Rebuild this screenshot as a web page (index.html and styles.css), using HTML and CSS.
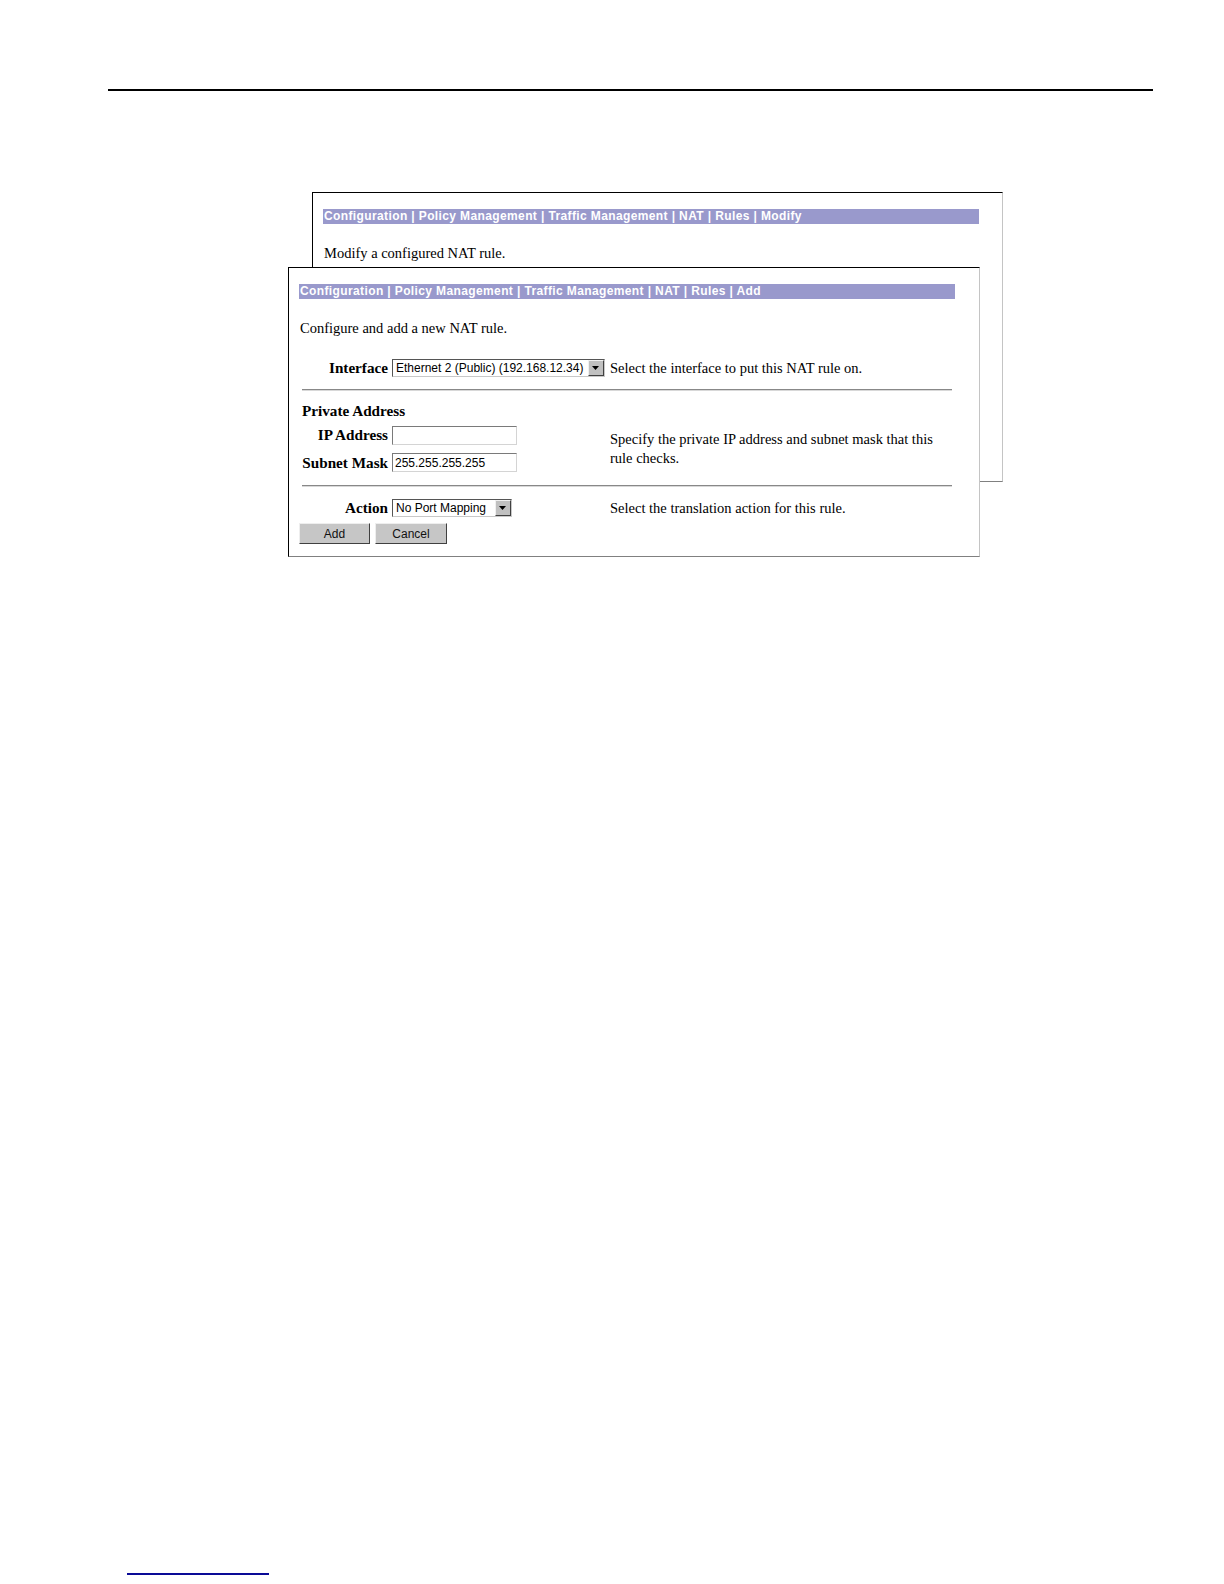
FILE: index.html
```html
<!DOCTYPE html>
<html lang="en">
<head>
<meta charset="utf-8">
<title>NAT Rules</title>
<link rel="stylesheet" href="styles.css">
</head>
<body>
<div class="page">
  <div class="top-rule"></div>
  <div class="desk">
    <section class="win win-back">
      <div class="crumb">Configuration | Policy Management | Traffic Management | NAT | Rules | Modify</div>
      <p class="intro">Modify a configured NAT rule.</p>
    </section>
    <section class="win win-front">
      <div class="crumb">Configuration | Policy Management | Traffic Management | NAT | Rules | Add</div>
      <p class="intro">Configure and add a new NAT rule.</p>
      <div class="form">
        <div class="lbl r-a">Interface</div>
        <div class="ctl r-a">
          <span class="select sel-if"><span class="sel-text">Ethernet 2 (Public) (192.168.12.34)</span><span class="sel-btn"><svg width="8" height="5" viewBox="0 0 8 5"><path d="M0 0h7L3.5 4z" fill="#000"/></svg></span></span>
        </div>
        <div class="desc r-a">Select the interface to put this NAT rule on.</div>
        <div class="rule r-b"></div>
        <div class="section-title r-c">Private Address</div>
        <div class="lbl r-d">IP Address</div>
        <div class="ctl r-d"><input class="text" type="text"></div>
        <div class="desc desc-span">Specify the private IP address and subnet mask that this rule checks.</div>
        <div class="lbl r-e">Subnet Mask</div>
        <div class="ctl r-e"><input class="text" type="text" value="255.255.255.255"></div>
        <div class="rule r-f"></div>
        <div class="lbl r-g">Action</div>
        <div class="ctl r-g">
          <span class="select sel-action"><span class="sel-text">No Port Mapping</span><span class="sel-btn"><svg width="8" height="5" viewBox="0 0 8 5"><path d="M0 0h7L3.5 4z" fill="#000"/></svg></span></span>
        </div>
        <div class="desc r-g">Select the translation action for this rule.</div>
      </div>
      <div class="buttons">
        <button class="btn btn-add" type="button">Add</button>
        <button class="btn btn-cancel" type="button">Cancel</button>
      </div>
    </section>
  </div>
  <div class="footer-rule"></div>
</div>
</body>
</html>
```

FILE: styles.css
```css
html, body {
  margin: 0;
  padding: 0;
  background: #fff;
}
body {
  font-family: "Liberation Serif", "Times New Roman", serif;
  color: #000;
}
.page {
  width: 1224px;
  height: 1584px;
  padding-top: 89px;
  box-sizing: border-box;
}
.top-rule {
  margin-left: 108px;
  width: 1045px;
  border-top: 2px solid #000;
}
.desk {
  position: relative;
  height: 470px;
}
.win {
  position: absolute;
  box-sizing: border-box;
  width: 691px;
  height: 290px;
  background: #fff;
  border-style: solid;
  border-width: 1px;
  border-color: #000 #c4c4c4 #808080 #000;
  padding: 16px 10px 0 10px;
}
.win-back {
  left: 312px;
  top: 101px;
}
.win-front {
  left: 288px;
  top: 176px;
  width: 692px;
}
.crumb {
  width: 656px;
  height: 15px;
  line-height: 15px;
  background: #9999cc;
  color: #fff;
  font-family: "Liberation Sans", Arial, sans-serif;
  font-weight: bold;
  font-size: 12px;
  letter-spacing: 0.38px;
  white-space: nowrap;
  overflow: hidden;
  padding-left: 1px;
  box-sizing: border-box;
}
.intro {
  margin: 21px 0 0 1px;
  font-size: 14.5px;
  line-height: 17px;
}
.form {
  margin: 20px 0 0 3px;
  width: 650px;
  display: grid;
  grid-template-columns: 86px 214px 1fr;
  grid-template-rows: 22px 22px 20px 28px 27px 19px 26px;
  column-gap: 4px;
  align-items: center;
}
.r-a { grid-row: 1; }
.r-b { grid-row: 2; }
.r-c { grid-row: 3; }
.r-d { grid-row: 4; }
.r-e { grid-row: 5; }
.r-f { grid-row: 6; }
.r-g { grid-row: 7; }
.lbl {
  grid-column: 1;
  text-align: right;
  font-weight: bold;
  font-size: 15.2px;
  line-height: 18px;
  white-space: nowrap;
}
.ctl {
  grid-column: 2;
  display: flex;
  align-items: center;
}
.desc {
  grid-column: 3;
  font-size: 14.5px;
  line-height: 18.2px;
}
.desc-span {
  grid-row: 4 / 6;
  padding-right: 8px;
}
.rule {
  grid-column: 1 / -1;
  height: 0;
  border-top: 1px solid #888;
  border-bottom: 1px solid #d8d8d8;
}
.section-title {
  grid-column: 1 / -1;
  font-weight: bold;
  font-size: 15.2px;
  line-height: 18px;
}
.text {
  box-sizing: border-box;
  width: 125px;
  height: 19px;
  margin: 0;
  padding: 0 2px;
  border-style: solid;
  border-width: 1px;
  border-color: #7a7a7a #d4d4d4 #d4d4d4 #7a7a7a;
  font-family: "Liberation Sans", Arial, sans-serif;
  font-size: 12px;
  color: #000;
  outline: none;
}
.select {
  box-sizing: border-box;
  display: inline-flex;
  align-items: center;
  height: 18px;
  border-style: solid;
  border-width: 1px;
  border-color: #555 #c8c8c8 #c8c8c8 #555;
  background: #fff;
  font-family: "Liberation Sans", Arial, sans-serif;
  font-size: 12px;
  white-space: nowrap;
}
.sel-if { width: 213px; }
.sel-action { width: 120px; }
.sel-text {
  flex: 1;
  padding-left: 3px;
  overflow: hidden;
}
.sel-btn {
  box-sizing: border-box;
  width: 16px;
  height: 16px;
  display: flex;
  align-items: center;
  justify-content: center;
  background: #c0c0c0;
  border-style: solid;
  border-width: 1px;
  border-color: #f0f0f0 #404040 #404040 #f0f0f0;
}
.buttons {
  margin-top: 2px;
  display: flex;
  gap: 5px;
}
.btn {
  box-sizing: border-box;
  height: 21px;
  margin: 0;
  padding: 0;
  background: #c6c6c6;
  border-style: solid;
  border-width: 1px;
  border-color: #eeeeee #404040 #404040 #eeeeee;
  font-family: "Liberation Sans", Arial, sans-serif;
  font-size: 12px;
  color: #111;
}
.btn-add { width: 71px; }
.btn-cancel { width: 72px; }
.footer-rule {
  margin-top: 1012px;
  margin-left: 127px;
  width: 142px;
  border-top: 2px solid #0a0a96;
}
```
